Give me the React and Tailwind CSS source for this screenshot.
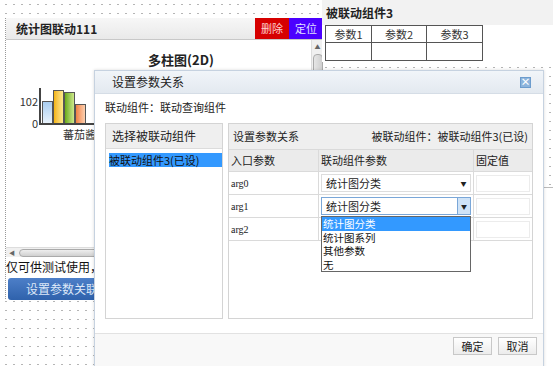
import React from 'react';

const font = { fontFamily: '"Noto Sans CJK SC", "Liberation Sans", sans-serif' };

const Bar = ({ className }) => <div className={`w-[11px] border border-[#555] border-b-0 ${className}`} />;

const ChartPanel = () => (
  <div className="absolute left-[5px] top-[18px] w-[318px] h-[281px] bg-white border-l border-dotted border-[#999]">
    <div className="h-[22px] flex items-center bg-gradient-to-b from-[#f7f7f7] to-[#e9e9e9] border-b border-[#c8c8c8]">
      <span className="pl-[10px] flex-1 text-[12px] font-bold text-[#222]">统计图联动111</span>
      <button className="h-full w-[34px] bg-[#d60000] text-[11px] text-[#ffd0d0]">删除</button>
      <button className="h-full w-[34px] bg-[#4b00ff] text-[11px] text-[#e0e0ff]">定位</button>
    </div>
    <div className="flex h-[207px]">
      <div className="flex-1 flex flex-col">
        <div className="text-center text-[13px] font-bold text-[#222] pt-[10px] pl-[45px]">多柱图(2D)</div>
        <div className="flex mt-[18px] ml-[14px]">
          <div className="flex flex-col items-end text-[11px] text-[#333] w-[18px] pt-[7px] leading-[13px]">
            <span>102</span>
            <span className="mt-[9px]">0</span>
          </div>
          <div className="flex flex-col">
            <div className="ml-[1px] h-[37px] w-[70px] border-l-2 border-b-2 border-[#444] flex items-end pl-[1px]">
              <Bar className="h-[22px] bg-gradient-to-b from-[#a9cdf0] to-[#e8f2fb]" />
              <Bar className="h-[33px] bg-gradient-to-r from-[#f3b400] to-[#fde98a]" />
              <Bar className="h-[31px] bg-gradient-to-r from-[#6aaa10] to-[#cfe98a]" />
              <Bar className="h-[19px] bg-gradient-to-r from-[#f08040] to-[#fbd0b0]" />
            </div>
            <span className="text-[11px] text-[#333] ml-[25px] mt-[1px]">蕃茄酱</span>
          </div>
        </div>
      </div>
      <div className="w-[12px] bg-[#f0f0f0] border-l border-[#ddd] flex flex-col items-center">
        <span className="text-[6px] text-[#666] mt-[2px]">▲</span>
        <div className="w-[10px] h-[24px] mt-[3px] rounded-sm bg-gradient-to-r from-[#e6e6e6] to-[#cfcfcf] border border-[#aaa]" />
      </div>
    </div>
    <div className="h-[10px] bg-[#f0f0f0] border-t border-[#ddd] flex items-center">
      <span className="text-[6px] text-[#666] ml-[3px]">◀</span>
      <div className="ml-[4px] h-[8px] w-[200px] rounded-sm bg-gradient-to-b from-[#eee] to-[#d0d0d0] border border-[#aaa]" />
    </div>
    <div className="text-[12px] text-[#111] whitespace-nowrap mt-[3px] leading-[14px]">仅可供测试使用，请勿用于商业用途</div>
    <div className="mt-[4px] ml-[2px] w-[150px] h-[22px] rounded-[3px] bg-gradient-to-b from-[#4d7fc8] to-[#2f62ac] text-[12px] text-[#dde8f8] flex items-center pl-[18px]">设置参数关联</div>
  </div>
);

const LinkedPanel = () => (
  <div className="absolute left-[322px] top-0 w-[231px] h-[62px] bg-white">
    <div className="h-[25px] bg-[#f2f2f2] flex items-center pl-[4px] text-[12px] font-bold text-[#222]">被联动组件3</div>
    <div className="ml-[3px] w-[158px] grid grid-cols-[46px_55px_55px] border border-[#555] text-[11px] text-[#333]">
      <div className="h-[17px] border-r border-b border-[#555] text-center leading-[16px]">参数1</div>
      <div className="h-[17px] border-r border-b border-[#555] text-center leading-[16px]">参数2</div>
      <div className="h-[17px] border-b border-[#555] text-center leading-[16px]">参数3</div>
      <div className="h-[17px] border-r border-[#555]" />
      <div className="h-[17px] border-r border-[#555]" />
      <div className="h-[17px]" />
    </div>
  </div>
);

const Select = ({ open }) => {
  const options = ['统计图分类', '统计图系列', '其他参数', '无'];
  return (
    <div className="relative">
      <div className={`h-[18px] flex items-center bg-white border ${open ? 'border-[#7aa7d8]' : 'border-[#ddd]'}`}>
        <span className="flex-1 pl-[4px] text-[11px] text-[#222]">统计图分类</span>
        <span className={`w-[13px] h-full flex items-center justify-center text-[6px] text-[#222] ${open ? 'bg-[#cfe3f7] border-l border-[#7aa7d8]' : ''}`}>▼</span>
      </div>
      {open && (
        <div className="absolute left-0 top-[19px] w-full bg-white border border-[#666] text-[10.5px] text-[#111] z-10">
          {options.map((o, i) => (
            <div key={o} className={`h-[13.5px] leading-[13.5px] pl-[1px] ${i === 0 ? 'bg-[#3399ff] text-white' : ''}`}>{o}</div>
          ))}
        </div>
      )}
    </div>
  );
};

const Dialog = () => {
  const rows = ['arg0', 'arg1', 'arg2'];
  return (
    <div className="absolute left-[94px] top-[70px] w-[450px] h-[300px] bg-white border border-[#c6d2e0] shadow-[0_0_3px_rgba(0,0,0,0.15)] flex flex-col">
      <div className="h-[23px] bg-gradient-to-b from-[#f1f5f9] to-[#e3e9f0] border-b border-[#d5dde6] flex items-center pl-[17px] pr-[12px]">
        <span className="flex-1 text-[12px] text-[#222]">设置参数关系</span>
        <span className="w-[11px] h-[11px] bg-[#8db4dc] border border-[#6c9ccd] flex items-center justify-center text-[10px] font-bold text-white leading-none">×</span>
      </div>
      <div className="px-[10px] pt-[6px] flex-1">
        <div className="text-[11px] text-[#222] h-[14px] leading-[14px]">联动组件：联动查询组件</div>
        <div className="flex gap-[5px] mt-[9px] h-[196px]">
          <div className="w-[118px] border border-[#d4d4d4] flex flex-col">
            <div className="h-[25px] bg-[#efefef] border-b border-[#dcdcdc] flex items-center pl-[6px] text-[12px] text-[#222]">选择被联动组件</div>
            <div className="mt-[4px] ml-[3px] h-[14px] bg-[#3399ff] text-[11px] leading-[14px] text-[#111]">被联动组件3(已设)</div>
          </div>
          <div className="flex-1 border border-[#d4d4d4] flex flex-col">
            <div className="h-[25px] bg-[#efefef] flex items-center justify-between px-[4px] text-[11px] text-[#222]">
              <span>设置参数关系</span>
              <span>被联动组件：被联动组件3(已设)</span>
            </div>
            <div className="grid grid-cols-[90px_155px_1fr] text-[11px] text-[#222]">
              <div className="h-[23px] bg-[#ebebeb] border-t border-r border-b border-[#dadada] flex items-center pl-[2px]">入口参数</div>
              <div className="h-[23px] bg-[#ebebeb] border-t border-r border-b border-[#dadada] flex items-center pl-[2px]">联动组件参数</div>
              <div className="h-[23px] bg-[#ebebeb] border-t border-b border-[#dadada] flex items-center pl-[2px]">固定值</div>
              {rows.map((r, i) => (
                <React.Fragment key={r}>
                  <div className="h-[23px] border-r border-b border-[#dadada] flex items-center pl-[2px] text-[10px] font-['Liberation_Serif']">{r}</div>
                  <div className="h-[23px] border-r border-b border-[#dadada] flex items-center px-[2px]">
                    {i < 2 && <div className="w-full"><Select open={i === 1} /></div>}
                  </div>
                  <div className="h-[23px] border-b border-[#dadada] flex items-center px-[2px]">
                    <div className="w-full h-[17px] border border-[#ececec]" />
                  </div>
                </React.Fragment>
              ))}
            </div>
          </div>
        </div>
      </div>
      <div className="h-[36px] bg-[#f8f8f8] border-t border-[#e2e2e2] flex items-start justify-end gap-[6px] pt-[3px] pr-[6px]">
        <button className="w-[39px] h-[18px] bg-gradient-to-b from-white to-[#ececec] border border-[#c8c8c8] text-[11px] text-[#222]">确定</button>
        <button className="w-[39px] h-[18px] bg-gradient-to-b from-white to-[#ececec] border border-[#c8c8c8] text-[11px] text-[#222]">取消</button>
      </div>
    </div>
  );
};

export default function App() {
  return (
    <div style={font} className="relative w-[553px] h-[366px] overflow-hidden bg-white bg-[radial-gradient(#b5b5b5_0.8px,transparent_1px)] bg-[length:8px_9px] bg-[position:2px_0px]">
      <ChartPanel />
      <LinkedPanel />
      <div className="absolute left-[540px] top-[187px] w-[20px] h-[200px] bg-white border border-[#bbb]" />
      <Dialog />
    </div>
  );
}
